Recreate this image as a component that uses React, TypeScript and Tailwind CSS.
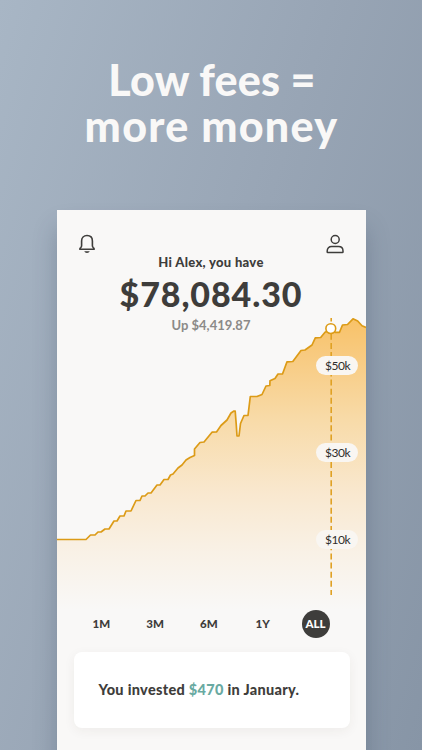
import { ReactNode } from "react";

type Point = [number, number];

const points: Point[] = [
  [0, 221.5], [29, 221.5], [33.5, 217], [38, 217], [41, 214], [44, 214],
  [48, 211], [52, 211], [57, 203], [60, 203], [63, 198], [67, 198],
  [69, 193], [74, 193], [79, 182.5], [83, 182.5], [85, 178], [88, 178],
  [91, 175], [94, 175], [100, 167], [103, 167], [107, 161.5], [111, 161.5],
  [113.5, 157], [116, 156], [121, 150], [125, 147], [129, 142], [133, 139.5],
  [137.5, 137.5], [137.5, 131], [143, 124.5], [147, 124], [155, 114.2],
  [159.5, 114], [164, 107.5], [170, 102], [174, 95], [177, 93], [178.2, 93.2],
  [179.2, 106], [180, 118], [182, 118], [183.5, 105.5], [187, 97.5],
  [191, 97.5], [193.3, 78.5], [200, 78.5], [205, 76.5], [209, 68],
  [212.8, 67.5], [213, 62.8], [218, 60.5], [221, 56], [225.5, 56],
  [230, 43.8], [235.8, 43.5], [244, 32.5], [248, 32], [255, 27],
  [258.3, 19.8], [263.7, 19.5], [268, 14.3], [273, 12], [278, 14.3],
  [282.5, 14.3], [285.5, 7], [290.5, 6.5], [296, 0.8], [300.7, 3],
  [305, 7.8], [309, 9.5],
];

const line = points.map(([x, y]) => `${x} ${y + 2}`).join(" L ");

const ranges = [
  { label: "1M", current: false },
  { label: "3M", current: false },
  { label: "6M", current: false },
  { label: "1Y", current: false },
  { label: "ALL", current: true },
];

function BellIcon() {
  return (
    <svg
      width="18"
      height="20"
      viewBox="0 0 18 20"
      fill="none"
      stroke="#3e3d3b"
      strokeWidth="1.6"
      strokeLinejoin="round"
      aria-hidden="true"
    >
      <path d="M3.6 6.9C3.6 3.6 5.8 1.5 9 1.5s5.4 2.1 5.4 5.4v4.9c0 .9.3 1.3.9 1.8.6.4.9.8.9 1.6H1.8c0-.8.3-1.2.9-1.6.6-.5.9-.9.9-1.8Z" />
      <path d="M6.3 17.2h5.4c-.5 1.1-1.4 1.7-2.7 1.7s-2.2-.6-2.7-1.7Z" fill="#3e3d3b" stroke="none" />
    </svg>
  );
}

function PersonIcon() {
  return (
    <svg
      width="18"
      height="20"
      viewBox="0 0 18 20"
      fill="none"
      stroke="#3e3d3b"
      strokeWidth="1.5"
      strokeLinejoin="round"
      aria-hidden="true"
    >
      <circle cx="9.2" cy="5.5" r="4" />
      <path d="M1.2 18v-1c0-2.7 1.7-4.5 4.4-4.5h7c2.7 0 4.4 1.8 4.4 4.5v1c0 .4-.2.6-.6.6H1.8c-.4 0-.6-.2-.6-.6Z" />
    </svg>
  );
}

function AxisLabel({ children }: { children: ReactNode }) {
  return (
    <span className="flex h-[19px] w-[42px] items-center justify-center rounded-full bg-[#f9f6f2] pl-[2px] text-[12px] leading-none tracking-[-0.5px] text-[#2f2e2d]">
      {children}
    </span>
  );
}

function Chart() {
  return (
    <div className="relative -mt-[18px] h-[294px]">
      <svg
        width="309"
        height="294"
        viewBox="0 0 309 294"
        fill="none"
        className="block"
        aria-hidden="true"
      >
        <defs>
          <linearGradient id="area" x1="0" y1="0" x2="0" y2="1">
            <stop offset="0" stopColor="#f8c268" />
            <stop offset="0.12" stopColor="#f8ca7f" />
            <stop offset="0.35" stopColor="#f8dba9" />
            <stop offset="0.6" stopColor="#f9e8cf" />
            <stop offset="0.8" stopColor="#f9f1e6" />
            <stop offset="1" stopColor="#f9f8f7" />
          </linearGradient>
        </defs>
        <path d={`M ${line} V 294 H 0 Z`} fill="url(#area)" />
        <path d={`M ${line}`} stroke="#dc9b17" strokeWidth="1.7" strokeLinejoin="round" />
        <path d="M274.2 2v277" stroke="#e0a124" strokeWidth="1.6" strokeDasharray="6 3.15" strokeDashoffset="2.5" />
        <circle cx="273.8" cy="12.6" r="4.9" fill="#fff" stroke="#dc9b17" strokeWidth="1.6" />
      </svg>
      <div className="absolute top-[40px] right-[8px] flex flex-col gap-[68px]">
        <AxisLabel>$50k</AxisLabel>
        <AxisLabel>$30k</AxisLabel>
        <AxisLabel>$10k</AxisLabel>
      </div>
    </div>
  );
}

export default function App() {
  return (
    <div className="flex h-[750px] w-[422px] flex-col items-center overflow-hidden bg-linear-[108deg,#a8b6c5_0%,#98a5b5_50%,#8795a6_100%] font-['Lato',sans-serif] text-[#3e3d3b]">
      <h1 className="flex h-[210px] shrink-0 flex-col items-center pt-[57px] text-[43px] leading-[46px] font-black whitespace-nowrap text-[#f9f8f7]">
        <span className="pl-[2px] tracking-[0.2px]">Low fees =</span>
        <span className="pl-[1px] tracking-[1.3px]">more money</span>
      </h1>

      <main className="flex h-[560px] w-[309px] shrink-0 flex-col bg-[#f9f8f7] shadow-[0_18px_22px_rgba(50,65,85,0.28)]">
        <header className="flex h-[44px] items-end justify-between pr-[22px] pl-[21px]">
          <BellIcon />
          <PersonIcon />
        </header>
        <div className="flex flex-col items-center whitespace-nowrap">
          <p className="-mt-px text-[13px] leading-[18px] font-black tracking-[0.3px]">Hi Alex, you have</p>
          <p className="mt-[2px] text-[34px] leading-[42px] font-black tracking-[0.9px]">$78,084.30</p>
          <p className="mt-[1px] text-[13px] leading-[18px] font-bold text-[#8b8a88]">Up $4,419.87</p>
        </div>

        <Chart />

        <div className="flex h-[28px] items-center justify-between pr-[36px] pl-[30px] text-[11.5px] font-black">
          {ranges.map((range) => (
            <button
              key={range.label}
              type="button"
              className={
                range.current
                  ? "flex size-[28px] items-center justify-center rounded-full bg-[#3e3d3b] text-white"
                  : "flex h-[28px] w-[28px] items-center justify-center pl-[2px] tracking-[0.2px]"
              }
            >
              {range.label}
            </button>
          ))}
        </div>

        <section className="mr-[16px] ml-[17px] mt-[14px] flex h-[76px] shrink-0 items-center rounded-[8px] bg-white pl-[25px] shadow-[0_3px_12px_rgba(60,50,40,0.06)]">
          <p className="text-[14.5px] font-black tracking-[0.31px] whitespace-nowrap">
            You invested <span className="text-[#69aaa2]">$470</span> in January.
          </p>
        </section>
      </main>
    </div>
  );
}
